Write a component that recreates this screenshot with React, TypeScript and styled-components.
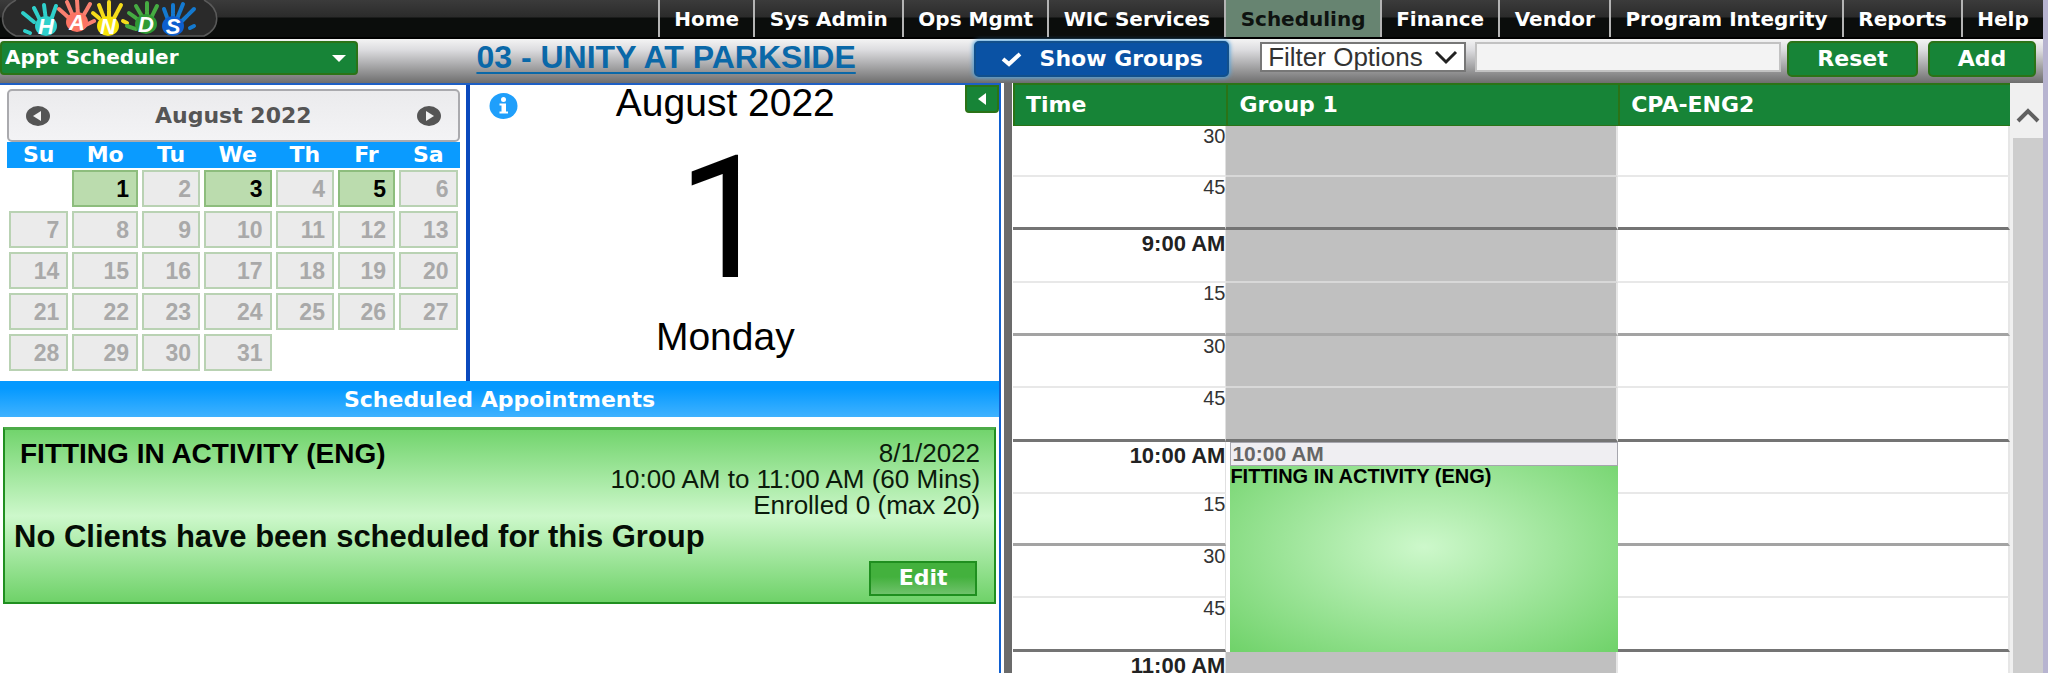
import React from "react";
import styled, { createGlobalStyle, css } from "styled-components";

const wide = `"DejaVu Sans", Verdana, sans-serif`;
const body = `"Liberation Sans", Arial, sans-serif`;

const GlobalStyle = createGlobalStyle`
  *, *::before, *::after { box-sizing: border-box; }
  body { margin: 0; background: #fff; font-family: ${body}; color: #000; }
  button, select, input { font: inherit; margin: 0; }
  button { cursor: pointer; }
`;

const Page = styled.div`
  display: flex;
  flex-direction: column;
  height: 100vh;
  overflow: hidden;
  border-right: 5px solid #b7b4d0;
`;

/* ---- top navigation ---- */
const TopBar = styled.header`
  display: flex;
  justify-content: space-between;
  height: 39px;
  flex: none;
  background: linear-gradient(#3b3b3b 0, #2b2b2b 17px, #0b0d0c 18px, #0b0d0c 100%);
  border-bottom: 2px solid #000;
`;

const Logo = styled.svg`
  display: block;
  flex: none;
  width: 220px;
  height: 37px;
  overflow: visible;
`;

const Nav = styled.nav`
  display: flex;
  flex: 0 0 67.8%;
`;

const NavLink = styled.a<{ $active?: boolean }>`
  flex: 1 0 auto;
  display: flex;
  align-items: center;
  justify-content: center;
  height: 37px;
  border-left: 2px solid #b4b4b4;
  font: bold 20px/24px ${wide};
  text-decoration: none;
  white-space: nowrap;
  color: ${(p) => (p.$active ? "#0e1310" : "#fff")};
  background: ${(p) => (p.$active ? "#678471" : "transparent")};
`;

/* ---- toolbar ---- */
const Toolbar = styled.div`
  display: flex;
  align-items: flex-start;
  flex: none;
  height: 44px;
  padding: 2px 7px 0 0;
  background: linear-gradient(#f4f4f4, #dcdcdf 25%, #6e6e6e);
`;

const SelectBox = styled.div`
  display: grid;
  flex: none;
  align-items: center;
  & > * { grid-area: 1 / 1; }
  svg {
    justify-self: end;
    pointer-events: none;
  }
`;

const ScreenSelect = styled(SelectBox)`
  width: 358px;
  svg { margin-right: 11px; }
  select {
    appearance: none;
    width: 100%;
    height: 34px;
    padding: 0 3px 2px;
    border: 2px solid #2b7317;
    border-radius: 4px;
    background: #178437;
    color: #fff;
    font: bold 20px/24px ${wide};
  }
`;

const FilterSelect = styled(SelectBox)`
  width: 206px;
  margin: 1px 9px 0 31px;
  svg { margin-right: 8px; }
  select {
    appearance: none;
    width: 100%;
    height: 30px;
    padding: 0 6px;
    border: 2px solid #777;
    border-radius: 0;
    background: #fff;
    color: #333;
    font: 26px/26px ${body};
  }
`;

const TitleArea = styled.h1`
  flex: 60 1 0;
  margin: 0;
  text-align: center;
  font: bold 32px/32px ${body};
  white-space: nowrap;
  a {
    color: #0a68a8;
    text-decoration: underline;
    text-decoration-thickness: 2px;
    text-underline-offset: 4px;
  }
`;

const FilterInput = styled.input`
  flex: 29 1 0;
  min-width: 0;
  height: 30px;
  margin: 1px 6px 0 0;
  border: 2px solid #c2c2c2;
  background: #f3f3f3;
`;

const ActionButton = styled.button<{ $width: number; $tone?: "blue" }>`
  display: flex;
  align-items: center;
  justify-content: center;
  gap: 18px;
  flex: none;
  width: ${(p) => p.$width}px;
  height: 36px;
  padding: 0 0 1px;
  border: 2px solid #2b7317;
  border-radius: 5px;
  background: #178437;
  color: #fff;
  font: bold 22px/26px ${wide};
  white-space: nowrap;
  & + & { margin-left: 10px; }
  ${(p) =>
    p.$tone === "blue" &&
    css`
      border-color: #12508c;
      background: #0a52a4;
      box-shadow: 0 0 4px 1px #4fa3e0;
    `}
`;

/* ---- main split ---- */
const Main = styled.main`
  display: flex;
  flex: 1;
  min-height: 0;
`;

const LeftPane = styled.section`
  flex: 0 0 49%;
  border-top: 2px solid #1e5fc4;
  border-right: 2px solid #0f5fd0;
  overflow: hidden;
`;

const Splitter = styled.div`
  flex: 0 0 12px;
  background: #6b6b6b;
  border: solid #fff;
  border-width: 0 1px 0 3px;
`;

const DayOverview = styled.div`
  display: grid;
  grid-template-columns: 47fr 53fr;
`;

/* ---- month calendar ---- */
const CalendarPane = styled.div`
  padding: 4px 6px 8px 7px;
  border-right: 4px solid #0a49bd;
`;

const MonthBar = styled.div`
  display: flex;
  align-items: center;
  justify-content: space-between;
  height: 53px;
  padding: 0 16px;
  border: 2px solid #aaaaae;
  border-radius: 5px;
  background: linear-gradient(#ebebed, #f3f3f5);
  color: #555;
  font: bold 22px/26px ${wide};
`;

const IconButton = styled.button`
  display: flex;
  padding: 0;
  border: 0;
  background: none;
`;

const MonthTable = styled.table`
  width: 100%;
  table-layout: fixed;
  border-collapse: collapse;
  th {
    height: 26px;
    padding: 0 0 1px;
    background: #0a9bff;
    color: #fff;
    font: bold 22px/24px ${wide};
  }
  td { padding: 2px; }
`;

const DayButton = styled.button<{ $open: boolean }>`
  display: block;
  width: 100%;
  height: 37px;
  padding: 0 7px 0 0;
  border: 2px solid ${(p) => (p.$open ? "#8dbd7d" : "#b9d2b3")};
  background: ${(p) => (p.$open ? "#bbdcae" : "#ebebeb")};
  color: ${(p) => (p.$open ? "#000" : "#a9a9a9")};
  font: bold 23px/26px ${body};
  text-align: right;
`;

/* ---- selected day ---- */
const DayPane = styled.div`
  display: grid;
  grid-template-columns: 48px 1fr 34px;
  align-items: start;
`;

const InfoIcon = styled.svg`
  margin: 8px 0 0 19px;
`;

const DayText = styled.div`
  display: flex;
  flex-direction: column;
  align-items: center;
  padding-right: 32px;
`;

const DayLabel = styled.div`
  font: 39px/36px ${body};
`;

const DayNumber = styled.div`
  margin: 33px 0 35px;
  font: 170px/130px Roboto, sans-serif;
`;

const CollapseButton = styled.button`
  display: flex;
  align-items: center;
  justify-content: center;
  width: 34px;
  height: 28px;
  padding: 0;
  border: 2px solid #2b7317;
  border-radius: 0 0 4px 4px;
  background: #178437;
`;

/* ---- appointments ---- */
const SectionTitle = styled.h2`
  margin: 0;
  height: 36px;
  background: linear-gradient(#0599ff 20%, #3fb2ff);
  color: #fff;
  font: bold 22px/38px ${wide};
  text-align: center;
`;

const Card = styled.article`
  display: flex;
  flex-direction: column;
  height: 177px;
  margin: 10px 3px 0;
  padding: 10px 14px 6px 9px;
  border: 2px solid #1f8f1f;
  border-top: 3px solid #4cab48;
  background: linear-gradient(#72d46d, #cdf8cb 50%, #6fd269);
`;

const CardTop = styled.div`
  display: flex;
  justify-content: space-between;
  h3 {
    margin: 0 0 0 6px;
    font: bold 28px/28px ${body};
  }
`;

const CardMeta = styled.div`
  font: 26px/26px ${body};
  text-align: right;
  color: #0b1a0b;
`;

const CardNote = styled.p`
  margin: 3px 0 0;
  font: bold 31px/32px ${body};
  color: #050d05;
`;

const EditButton = styled.button`
  align-self: flex-end;
  width: 108px;
  height: 35px;
  margin: 8px 3px 0 0;
  padding: 0 0 2px;
  border: 2px solid #1f8f1f;
  background: linear-gradient(#43b13d 45%, #6fc26b);
  color: #fff;
  font: bold 22px/26px ${wide};
`;

/* ---- time grid ---- */
const GridPane = styled.section`
  flex: 1;
  min-width: 0;
  overflow: hidden;
`;

const TimeTable = styled.table`
  width: 100%;
  table-layout: fixed;
  border-collapse: separate;
  border-spacing: 0;
  thead th {
    height: 43px;
    padding: 0 11px;
    border: solid #2b7317;
    border-width: 2px 0 1px 2px;
    background: #178437;
    color: #fff;
    font: bold 22px/26px ${wide};
    text-align: left;
  }
`;

type Line = "hour" | "half" | "quarter";
const lineColor = { hour: "#747474", half: "#a3a3a3", quarter: "#e8e8e8" };
const lineColorOff = { hour: "#747474", half: "#a8a8a8", quarter: "#d8d8d8" };

const SlotRow = styled.tr<{ $height: number }>`
  height: ${(p) => p.$height}px;
`;

const SlotCell = styled.td<{ $line: Line; $off?: boolean }>`
  padding: 0;
  background: ${(p) => (p.$off ? "#c0c0c0" : "#fff")};
  border-right: 2px solid #e6e6e6;
  border-bottom: ${(p) => (p.$line === "quarter" ? 2 : 3)}px solid
    ${(p) => (p.$off ? lineColorOff : lineColor)[p.$line]};
`;

const TimeCell = styled.th<{ $line: Line; $hour: boolean }>`
  padding: ${(p) => (p.$hour ? 3 : 0)}px 0 0;
  border-right: 1px solid #e0e0e0;
  border-bottom: ${(p) => (p.$line === "quarter" ? 2 : 3)}px solid
    ${(p) => lineColor[p.$line]};
  color: ${(p) => (p.$hour ? "#222" : "#333")};
  font: ${(p) => (p.$hour ? "bold 22px/22px" : "normal 20px/20px")} ${body};
  text-align: right;
  vertical-align: top;
  white-space: nowrap;
`;

const EventCell = styled.td`
  position: relative;
  padding: 0;
`;

const EventBlock = styled.div`
  position: absolute;
  inset: 0 0 0 4px;
  overflow: hidden;
  background: radial-gradient(ellipse farthest-corner at center, #cdf8cb, #6fd269);
  font: bold 20px/20px ${body};
`;

const EventTime = styled.div`
  height: 24px;
  padding: 0 1px;
  border: 1px solid #a6a6ae;
  background: #efeef2;
  color: #666;
  font: bold 21px/22px ${body};
`;

/* ---- scroll bar ---- */
const ScrollBar = styled.div`
  flex: 0 0 33px;
  background: #cdcdcd;
  border-left: 3px solid #f0f0f0;
`;

const ScrollUp = styled.button`
  display: flex;
  align-items: center;
  justify-content: center;
  width: 100%;
  height: 55px;
  padding: 10px 0 0;
  border: 0;
  background: #f0f0f0;
`;

const navItems = [
  "Home", "Sys Admin", "Ops Mgmt", "WIC Services", "Scheduling",
  "Finance", "Vendor", "Program Integrity", "Reports", "Help",
];

const weekDays = ["Su", "Mo", "Tu", "We", "Th", "Fr", "Sa"];
const columnShares = ["14%", "15.4%", "13.7%", "15.8%", "13.8%", "13.5%", "13.8%"];
const openDays = [1, 3, 5];
const weeks = Array.from({ length: 5 }, (_, w) =>
  Array.from({ length: 7 }, (_, d) => w * 7 + d)
);

type Slot = { label: string; line: Line; height: number; hour?: boolean; event?: boolean; covered?: boolean };
const slots: Slot[] = [
  { label: "30", line: "quarter", height: 51 },
  { label: "45", line: "hour", height: 53 },
  { label: "9:00 AM", line: "quarter", height: 53, hour: true },
  { label: "15", line: "half", height: 53 },
  { label: "30", line: "quarter", height: 52 },
  { label: "45", line: "hour", height: 54 },
  { label: "10:00 AM", line: "quarter", height: 52, hour: true, event: true },
  { label: "15", line: "half", height: 52, covered: true },
  { label: "30", line: "quarter", height: 52, covered: true },
  { label: "45", line: "hour", height: 54, covered: true },
  { label: "11:00 AM", line: "quarter", height: 53, hour: true },
];

const hands = [
  { letter: "H", x: 46, y: 26, palm: "#2fd0cb", tip: "#2fd0cb",
    fingers: "M23 13L34 22M34 8L40 20M44 5L46 20M56 6L51 20M25 31L30 33" },
  { letter: "A", x: 77, y: 22, palm: "#fb7463", tip: "#f98070",
    fingers: "M59 9L69 18M67 2L73 16M77 0L78 15M90 4L82 18M94 21L84 26" },
  { letter: "N", x: 108, y: 26, palm: "#f7e40a", tip: "#f5dc1b",
    fingers: "M93 13L99 18M99 5L104 18M109 2L109 18M121 5L113 20M123 21L127 23" },
  { letter: "D", x: 146, y: 24, palm: "#2f9a35", tip: "#46ab42",
    fingers: "M129 13L140 21M136 6L143 18M147 3L147 17M157 6L151 18M127 26L136 29" },
  { letter: "S", x: 173, y: 26, palm: "#0d5fd0", tip: "#1479cf",
    fingers: "M164 9L168 20M173 5L173 19M183 4L177 19M194 9L182 21M190 28L194 26" },
];

function HandsLogo() {
  return (
    <Logo viewBox="0 0 220 37" role="img" aria-label="HANDS">
      <path d="M16 0C-2 9 -2 28 16 36H204C221 28 221 9 204 0" fill="#2a2a2a" stroke="#5a5a5a" strokeWidth="1.5" />
      {hands.map((h) => (
        <g key={h.letter}>
          <path d={h.fingers} stroke={h.tip} strokeWidth="4" strokeLinecap="round" strokeDasharray="8 1" fill="none" />
          <ellipse cx={h.x} cy={h.y} rx="11" ry="10" fill={h.palm} />
          <text x={h.x} y={h.y + 8} textAnchor="middle" fill="#fff" fontFamily={body} fontSize="22" fontWeight="bold" fontStyle="italic">
            {h.letter}
          </text>
        </g>
      ))}
    </Logo>
  );
}

function RoundArrow({ flip }: { flip?: boolean }) {
  return (
    <svg width="26" height="20" viewBox="0 0 26 20" aria-hidden="true">
      <ellipse cx="13" cy="10" rx="12" ry="10" fill="#555" />
      <path d={flip ? "M10 5V15L18 10Z" : "M16 5V15L8 10Z"} fill="#f2f2f2" />
    </svg>
  );
}

export default function App() {
  return (
    <>
      <GlobalStyle />
      <Page>
        <TopBar>
          <HandsLogo />
          <Nav>
            {navItems.map((item) => (
              <NavLink key={item} href="#" $active={item === "Scheduling"}>
                {item}
              </NavLink>
            ))}
          </Nav>
        </TopBar>

        <Toolbar>
          <ScreenSelect>
            <select aria-label="Screen">
              <option>Appt Scheduler</option>
            </select>
            <svg width="16" height="8" viewBox="0 0 16 8" aria-hidden="true">
              <path d="M1 1H15L8 8Z" fill="#fff" />
            </svg>
          </ScreenSelect>
          <TitleArea>
            <a href="#">03 - UNITY AT PARKSIDE</a>
          </TitleArea>
          <ActionButton type="button" $width={255} $tone="blue">
            <svg width="21" height="16" viewBox="0 0 21 16" aria-hidden="true">
              <path d="M2 8L8 13L19 3" fill="none" stroke="#fff" strokeWidth="4" />
            </svg>
            Show Groups
          </ActionButton>
          <FilterSelect>
            <select aria-label="Filter">
              <option>Filter Options</option>
            </select>
            <svg width="24" height="15" viewBox="0 0 24 15" aria-hidden="true">
              <path d="M2 2L12 12L22 2" fill="none" stroke="#222" strokeWidth="3" />
            </svg>
          </FilterSelect>
          <FilterInput type="text" aria-label="Filter text" />
          <ActionButton type="button" $width={131}>Reset</ActionButton>
          <ActionButton type="button" $width={108}>Add</ActionButton>
        </Toolbar>

        <Main>
          <LeftPane>
            <DayOverview>
              <CalendarPane>
                <MonthBar>
                  <IconButton type="button" aria-label="Previous month"><RoundArrow /></IconButton>
                  August 2022
                  <IconButton type="button" aria-label="Next month"><RoundArrow flip /></IconButton>
                </MonthBar>
                <MonthTable>
                  <colgroup>
                    {columnShares.map((w, i) => <col key={i} width={w} />)}
                  </colgroup>
                  <thead>
                    <tr>{weekDays.map((d) => <th key={d} scope="col">{d}</th>)}</tr>
                  </thead>
                  <tbody>
                    {weeks.map((week) => (
                      <tr key={week[0]}>
                        {week.map((d) => (
                          <td key={d}>
                            {d > 0 && d <= 31 && (
                              <DayButton type="button" $open={openDays.includes(d)}>{d}</DayButton>
                            )}
                          </td>
                        ))}
                      </tr>
                    ))}
                  </tbody>
                </MonthTable>
              </CalendarPane>
              <DayPane>
                <InfoIcon width="29" height="26" viewBox="0 0 29 26" role="img" aria-label="Information">
                  <ellipse cx="14.5" cy="13" rx="14" ry="13" fill="#1f9ffb" />
                  <circle cx="14.5" cy="6.5" r="2.5" fill="#fff" />
                  <path d="M10.5 10.5H17V18.5H19V20.5H10.5V18.5H12.5V12.5H10.5Z" fill="#fff" />
                </InfoIcon>
                <DayText>
                  <DayLabel>August 2022</DayLabel>
                  <DayNumber>1</DayNumber>
                  <DayLabel>Monday</DayLabel>
                </DayText>
                <CollapseButton type="button" aria-label="Collapse panel">
                  <svg width="8" height="12" viewBox="0 0 8 12" aria-hidden="true">
                    <path d="M8 0V12L0 6Z" fill="#fff" />
                  </svg>
                </CollapseButton>
              </DayPane>
            </DayOverview>

            <SectionTitle>Scheduled Appointments</SectionTitle>
            <Card>
              <CardTop>
                <h3>FITTING IN ACTIVITY (ENG)</h3>
                <CardMeta>
                  <div>8/1/2022</div>
                  <div>10:00 AM to 11:00 AM (60 Mins)</div>
                  <div>Enrolled 0 (max 20)</div>
                </CardMeta>
              </CardTop>
              <CardNote>No Clients have been scheduled for this Group</CardNote>
              <EditButton type="button">Edit</EditButton>
            </Card>
          </LeftPane>

          <Splitter />

          <GridPane>
            <TimeTable>
              <colgroup>
                <col width="21.4%" />
                <col width="39.3%" />
                <col width="39.3%" />
              </colgroup>
              <thead>
                <tr>
                  <th scope="col">Time</th>
                  <th scope="col">Group 1</th>
                  <th scope="col">CPA-ENG2</th>
                </tr>
              </thead>
              <tbody>
                {slots.map((s, i) => (
                  <SlotRow key={i} $height={s.height}>
                    <TimeCell scope="row" $line={s.line} $hour={!!s.hour}>{s.label}</TimeCell>
                    {s.event && (
                      <EventCell rowSpan={4}>
                        <EventBlock>
                          <EventTime>10:00 AM</EventTime>
                          FITTING IN ACTIVITY (ENG)
                        </EventBlock>
                      </EventCell>
                    )}
                    {!s.event && !s.covered && <SlotCell $line={s.line} $off />}
                    <SlotCell $line={s.line} />
                  </SlotRow>
                ))}
              </tbody>
            </TimeTable>
          </GridPane>

          <ScrollBar>
            <ScrollUp type="button" aria-label="Scroll up">
              <svg width="24" height="15" viewBox="0 0 24 15" aria-hidden="true">
                <path d="M2 13L12 3L22 13" fill="none" stroke="#606060" strokeWidth="4" />
              </svg>
            </ScrollUp>
          </ScrollBar>
        </Main>
      </Page>
    </>
  );
}
